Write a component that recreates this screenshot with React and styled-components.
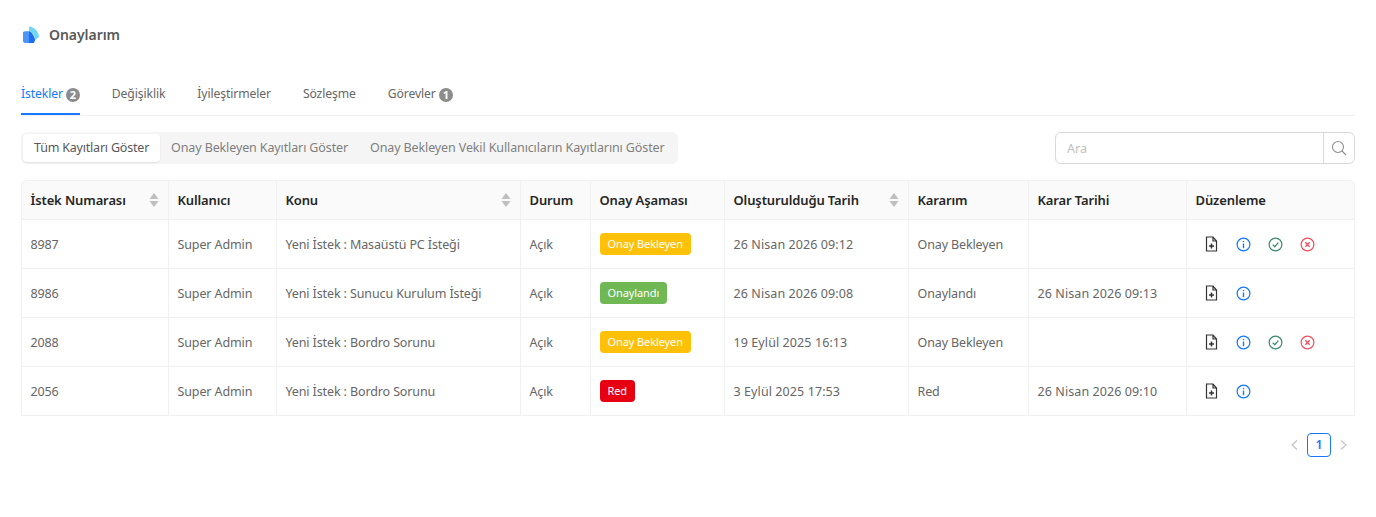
import React from 'react'
import styled, { createGlobalStyle } from 'styled-components'

const GlobalStyle = createGlobalStyle`
  html, body {
    margin: 0;
    background: #fff;
    font-family: 'Noto Sans', 'Open Sans', sans-serif;
    font-size: 12.5px;
    letter-spacing: -0.12px;
    color: #666;
  }
`

const Page = styled.div`
  padding: 0 21px;
  height: 517px;
  box-sizing: border-box;
  overflow: hidden;
`

const Header = styled.div`
  display: flex;
  align-items: center;
  gap: 9px;
  height: 69px;
  padding-left: 1px;
`

const Title = styled.h1`
  margin: 0;
  font-size: 14px;
  font-weight: 600;
  letter-spacing: -0.05px;
  color: #595959;
`

const Tabs = styled.div`
  display: flex;
  gap: 32px;
  height: 46px;
  border-bottom: 1px solid #f0f0f0;
`

const Tab = styled.div`
  display: flex;
  align-items: center;
  gap: 3px;
  height: 44px;
  padding-top: 4px;
  box-sizing: border-box;
  font-size: 12.2px;
  color: ${props => (props.$active ? '#1677ff' : '#666')};
  border-bottom: 2px solid ${props => (props.$active ? '#1677ff' : 'transparent')};
  height: 46px;
`

const Count = styled.span`
  width: 14px;
  height: 14px;
  border-radius: 50%;
  background: #8c8c8c;
  color: #fff;
  font-size: 11px;
  font-weight: 700;
  line-height: 14px;
  text-align: center;
  margin-top: 3px;
`

const Toolbar = styled.div`
  display: flex;
  justify-content: space-between;
  align-items: center;
  margin-top: 16px;
  height: 32px;
`

const Segments = styled.div`
  display: flex;
  background: #f5f5f5;
  border-radius: 6px;
  padding: 2px;
  height: 32px;
  box-sizing: border-box;
`

const Segment = styled.div`
  padding: 0 11px;
  line-height: 28px;
  border-radius: 4px;
  letter-spacing: ${props => (props.$active ? '-0.2px' : '-0.12px')};
  color: ${props => (props.$active ? '#595959' : '#808080')};
  background: ${props => (props.$active ? '#fff' : 'transparent')};
  box-shadow: ${props => (props.$active ? '0 1px 2px rgba(0,0,0,.08)' : 'none')};
`

const Search = styled.div`
  display: flex;
  width: 300px;
  height: 32px;
  box-sizing: border-box;
  border: 1px solid #d9d9d9;
  border-radius: 6px;
`

const SearchInput = styled.input`
  flex: 1;
  min-width: 0;
  border: 0;
  outline: 0;
  padding: 0 11px;
  background: transparent;
  font: inherit;
  &::placeholder {
    color: #bfbfbf;
  }
`

const SearchButton = styled.div`
  width: 30px;
  display: flex;
  align-items: center;
  justify-content: center;
  border-left: 1px solid #d9d9d9;
  color: #8c8c8c;
`

const Table = styled.table`
  width: 1334px;
  margin-top: 16px;
  border-collapse: separate;
  border-spacing: 0;
  table-layout: fixed;
  border-top: 1px solid #f0f0f0;
  border-left: 1px solid #f0f0f0;
  border-radius: 6px 6px 0 0;
`

const Th = styled.th`
  height: 39px;
  padding: 0 8px 0 8.5px;
  background: #fafafa;
  color: #262626;
  font-size: 13px;
  font-weight: 600;
  text-align: left;
  border-right: 1px solid #f0f0f0;
  border-bottom: 1px solid #f0f0f0;
  width: ${props => props.$width}px;
  box-sizing: border-box;
  &:first-child {
    border-top-left-radius: 6px;
  }
  &:last-child {
    border-top-right-radius: 6px;
  }
`

const HeadInner = styled.div`
  display: flex;
  align-items: center;
  justify-content: space-between;
`

const SortWrap = styled.span`
  display: flex;
  margin-right: 1px;
`

const Td = styled.td`
  height: 49px;
  padding: 0 8px 0 8.5px;
  color: #666;
  border-right: 1px solid #f0f0f0;
  border-bottom: 1px solid #f0f0f0;
  white-space: nowrap;
  box-sizing: border-box;
`

const DateTd = styled(Td)`
  letter-spacing: 0.09px;
`

const Badge = styled.span`
  display: inline-block;
  height: 22px;
  line-height: 22px;
  padding: 0 8px;
  border-radius: 4px;
  font-size: 11px;
  letter-spacing: -0.1px;
  color: #fff;
  background: ${props => props.$bg};
`

const Actions = styled.div`
  display: flex;
  gap: 17px;
  padding-left: 8px;
  align-items: center;
`

const Pager = styled.div`
  display: flex;
  justify-content: flex-end;
  align-items: center;
  gap: 6px;
  margin-top: 17px;
  margin-right: 6px;
  color: #c4c4c4;
`

const PageNumber = styled.div`
  width: 24px;
  height: 24px;
  box-sizing: border-box;
  border: 1px solid #1677ff;
  border-radius: 4px;
  color: #1677ff;
  font-weight: 600;
  text-align: center;
  line-height: 22px;
`

const Logo = () => (
  <svg width="18" height="18" viewBox="0 0 18 18">
    <path d="M7 .5c5 .5 9.500 4.500 10 10.500l-4 3c0-4-2-7.500-6-9z" fill="#6fd6f7" />
    <path d="M1 7c0-1 .8-1.800 1.800-1.800H7c3 1 5 4.500 6 8.800l-1 2.500c-.5.5-1 .5-1.500.5H3c-1 0-2-1-2-2z" fill="#4d94fb" />
    <path d="M7 5.200c3 1 5 4.500 6 8.800l-1 2.500-.5.5H7z" fill="#1e6cf0" />
  </svg>
)

const SortIcon = () => (
  <svg width="10" height="16" viewBox="0 0 10 16" fill="#bfbfbf">
    <path d="M5 1l4.500 6h-9zM5 15L.5 9h9z" />
  </svg>
)

const DocIcon = () => (
  <svg width="15" height="16" viewBox="0 0 15 16" fill="none" stroke="#333" strokeWidth="1.200">
    <path d="M2.500 1H9l3.500 4v10h-10zM9 1v4h3.500" />
    <path d="M7.500 7.500v5M5 10h5" strokeWidth="1.500" />
  </svg>
)

const InfoIcon = () => (
  <svg width="15" height="15" viewBox="0 0 16 16" fill="none" stroke="#1677ff" strokeWidth="1.300">
    <circle cx="8" cy="8" r="6.800" />
    <path d="M8 7v5" strokeWidth="1.500" />
    <path d="M8 4.200v1.400" strokeWidth="1.500" />
  </svg>
)

const CheckIcon = () => (
  <svg width="15" height="15" viewBox="0 0 16 16" fill="none" stroke="#3a8a6e" strokeWidth="1.300">
    <circle cx="8" cy="8" r="6.800" />
    <path d="M5 8.200l2.200 2.200L11 6" />
  </svg>
)

const CrossIcon = () => (
  <svg width="15" height="15" viewBox="0 0 16 16" fill="none" stroke="#f0505e" strokeWidth="1.300">
    <circle cx="8" cy="8" r="6.800" />
    <path d="M5.700 5.700l4.600 4.600M10.300 5.700l-4.600 4.600" strokeWidth="1.500" />
  </svg>
)

const SearchIcon = () => (
  <svg width="16" height="16" viewBox="0 0 16 16" fill="none" stroke="currentColor" strokeWidth="1.100">
    <circle cx="7" cy="7" r="5.500" />
    <path d="M11 11l4 4" />
  </svg>
)

const Chevron = ({ dir }) => (
  <svg width="12" height="12" viewBox="0 0 12 12" fill="none" stroke="currentColor" strokeWidth="1.200">
    <path d={dir === 'left' ? 'M8 1.500L3 6l5 4.500' : 'M4 1.500L9 6l-5 4.500'} />
  </svg>
)

const columns = [
  { label: 'İstek Numarası', width: 147, sort: true },
  { label: 'Kullanıcı', width: 108 },
  { label: 'Konu', width: 244, sort: true },
  { label: 'Durum', width: 70 },
  { label: 'Onay Aşaması', width: 134 },
  { label: 'Oluşturulduğu Tarih', width: 184, sort: true },
  { label: 'Kararım', width: 120 },
  { label: 'Karar Tarihi', width: 158 },
  { label: 'Düzenleme', width: 168 },
]

const badgeColors = { 'Onay Bekleyen': '#ffc107', Onaylandı: '#70b853', Red: '#e60012' }

const rows = [
  ['8987', 'Yeni İstek : Masaüstü PC İsteği', 'Onay Bekleyen', '26 Nisan 2026 09:12', ''],
  ['8986', 'Yeni İstek : Sunucu Kurulum İsteği', 'Onaylandı', '26 Nisan 2026 09:08', '26 Nisan 2026 09:13'],
  ['2088', 'Yeni İstek : Bordro Sorunu', 'Onay Bekleyen', '19 Eylül 2025 16:13', ''],
  ['2056', 'Yeni İstek : Bordro Sorunu', 'Red', '3 Eylül 2025 17:53', '26 Nisan 2026 09:10'],
]

export default function App() {
  return (
    <Page>
      <GlobalStyle />
      <Header>
        <Logo />
        <Title>Onaylarım</Title>
      </Header>
      <Tabs>
        <Tab $active>İstekler <Count>2</Count></Tab>
        <Tab>Değişiklik</Tab>
        <Tab>İyileştirmeler</Tab>
        <Tab>Sözleşme</Tab>
        <Tab>Görevler <Count>1</Count></Tab>
      </Tabs>
      <Toolbar>
        <Segments>
          <Segment $active>Tüm Kayıtları Göster</Segment>
          <Segment>Onay Bekleyen Kayıtları Göster</Segment>
          <Segment>Onay Bekleyen Vekil Kullanıcıların Kayıtlarını Göster</Segment>
        </Segments>
        <Search>
          <SearchInput placeholder="Ara" />
          <SearchButton><SearchIcon /></SearchButton>
        </Search>
      </Toolbar>
      <Table>
        <thead>
          <tr>
            {columns.map(col => (
              <Th key={col.label} $width={col.width}>
                <HeadInner>
                  {col.label}
                  {col.sort ? <SortWrap><SortIcon /></SortWrap> : null}
                </HeadInner>
              </Th>
            ))}
          </tr>
        </thead>
        <tbody>
          {rows.map(([id, subject, stage, created, decided]) => (
            <tr key={id}>
              <Td>{id}</Td>
              <Td>Super Admin</Td>
              <Td>{subject}</Td>
              <Td>Açık</Td>
              <Td><Badge $bg={badgeColors[stage]}>{stage}</Badge></Td>
              <DateTd>{created}</DateTd>
              <Td>{stage}</Td>
              <DateTd>{decided}</DateTd>
              <Td>
                <Actions>
                  <DocIcon />
                  <InfoIcon />
                  {stage === 'Onay Bekleyen' ? <CheckIcon /> : null}
                  {stage === 'Onay Bekleyen' ? <CrossIcon /> : null}
                </Actions>
              </Td>
            </tr>
          ))}
        </tbody>
      </Table>
      <Pager>
        <Chevron dir="left" />
        <PageNumber>1</PageNumber>
        <Chevron dir="right" />
      </Pager>
    </Page>
  )
}
